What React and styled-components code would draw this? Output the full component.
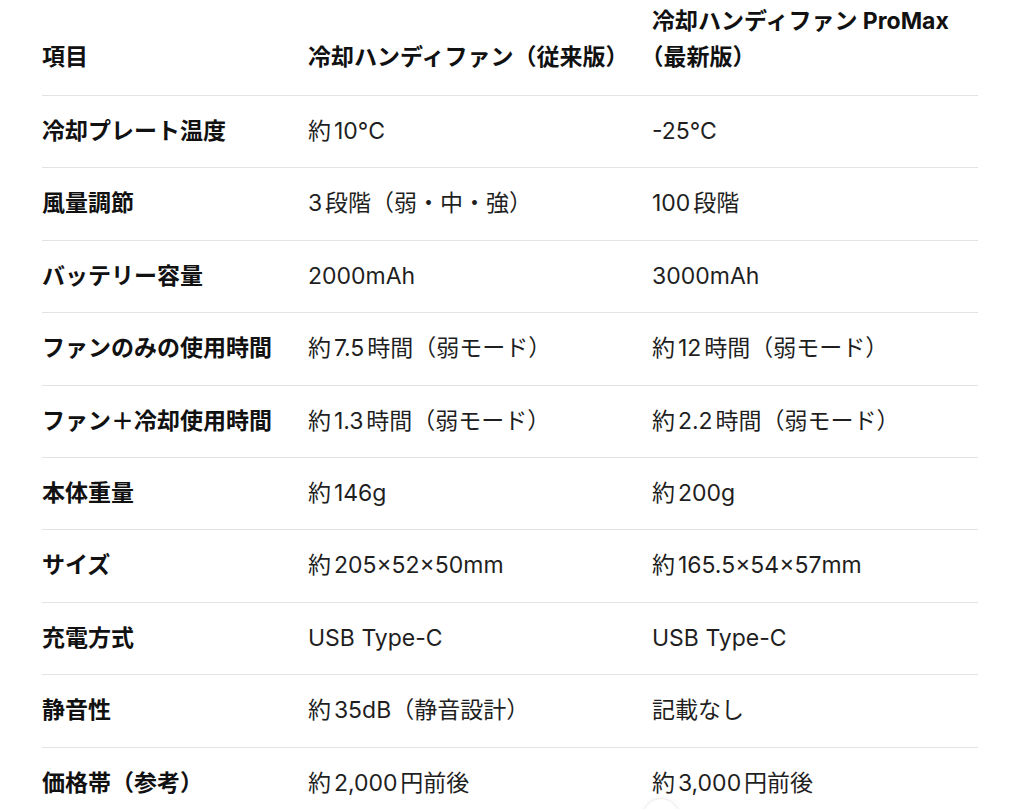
import React from 'react';
import styled, { createGlobalStyle } from 'styled-components';

const GlobalStyle = createGlobalStyle`
  html, body {
    margin: 0;
    padding: 0;
    background: #ffffff;
    overflow: hidden;
  }
  body {
    font-family: "Inter", "Noto Sans CJK JP", sans-serif;
    color: #222222;
    -webkit-font-smoothing: antialiased;
  }
`;

const Page = styled.div`
  width: 1024px;
  height: 809px;
  padding: 3px 46px 0 42px;
  box-sizing: border-box;
  overflow: hidden;
`;

const Table = styled.div`
  display: grid;
  grid-template-columns: 266px 344px 326px;
  font-size: 23px;
  text-autospace: normal;
  text-spacing-trim: trim-start;
`;

const Row = styled.div`
  display: contents;
`;

const Cell = styled.div`
  display: flex;
  align-items: ${p => (p.$head ? 'flex-end' : 'center')};
  padding: ${p => (p.$head ? '0 12px 20px 0' : '18px 12px 18px 0')};
  line-height: ${p => (p.$head ? '36px' : '35.4px')};
  border-bottom: ${p => (p.$last ? 'none' : '1px solid #e3e3e3')};
  font-weight: ${p => (p.$bold ? 700 : 400)};
  color: ${p => (p.$bold ? '#111111' : '#1f1f1f')};
  white-space: ${p => (p.$head ? 'normal' : 'nowrap')};
`;

const ScrollButton = styled.div`
  position: fixed;
  left: 643px;
  top: 798px;
  width: 34px;
  height: 34px;
  border-radius: 50%;
  background: #ffffff;
  border: 1px solid #ececec;
  box-shadow: 0 0 6px rgba(0, 0, 0, 0.06);
`;

const header = ['項目', '冷却ハンディファン（従来版）', '冷却ハンディファン ProMax（最新版）'];

const rows = [
  ['冷却プレート温度', '約10°C', '-25°C'],
  ['風量調節', '3段階（弱・中・強）', '100段階'],
  ['バッテリー容量', '2000mAh', '3000mAh'],
  ['ファンのみの使用時間', '約7.5時間（弱モード）', '約12時間（弱モード）'],
  ['ファン＋冷却使用時間', '約1.3時間（弱モード）', '約2.2時間（弱モード）'],
  ['本体重量', '約146g', '約200g'],
  ['サイズ', '約205×52×50mm', '約165.5×54×57mm'],
  ['充電方式', 'USB Type-C', 'USB Type-C'],
  ['静音性', '約35dB（静音設計）', '記載なし'],
  ['価格帯（参考）', '約2,000円前後', '約3,000円前後'],
];

export default function App() {
  return (
    <>
      <GlobalStyle />
      <Page>
        <Table>
          <Row>
            {header.map(h => (
              <Cell key={h} $head $bold>{h}</Cell>
            ))}
          </Row>
          {rows.map((r, i) => (
            <Row key={r[0]}>
              {r.map((c, j) => (
                <Cell key={j} $bold={j === 0} $last={i === rows.length - 1}>{c}</Cell>
              ))}
            </Row>
          ))}
        </Table>
      </Page>
      <ScrollButton />
    </>
  );
}
